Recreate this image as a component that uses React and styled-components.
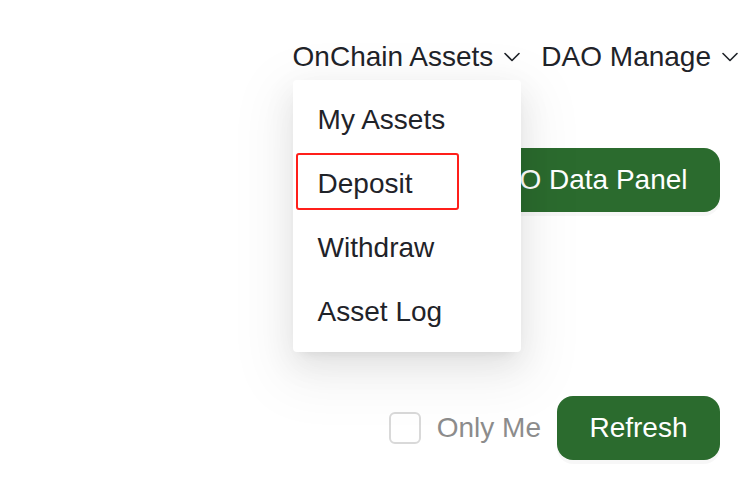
import React from "react";
import styled, { createGlobalStyle } from "styled-components";

const GlobalStyle = createGlobalStyle`
  html, body {
    margin: 0;
    padding: 0;
    background: #ffffff;
  }
  body {
    font-family: "Liberation Sans", Arial, sans-serif;
    color: #1f2329;
  }
`;

const Chevron = () => (
  <svg width="16" height="10" viewBox="0 0 16 10" fill="none">
    <polyline
      points="1,1.5 8,8.5 15,1.5"
      stroke="currentColor"
      strokeWidth="1.6"
      strokeLinecap="round"
      strokeLinejoin="round"
    />
  </svg>
);

const menuItems = ["My Assets", "Deposit", "Withdraw", "Asset Log"];

const App = () => {
  return (
    <>
      <GlobalStyle />
      <Page>
        <Header>
          <NavItem>
            <span>OnChain Assets</span>
            <Chevron />
            <Menu>
              {menuItems.map((item) => (
                <MenuItem key={item}>
                  {item === "Deposit" && <Mark />}
                  {item}
                </MenuItem>
              ))}
            </Menu>
          </NavItem>
          <NavItem>
            <span>DAO Manage</span>
            <Chevron />
          </NavItem>
        </Header>
        <Content>
          <Toolbar $top={70}>
            <Button>DAO Data Panel</Button>
          </Toolbar>
          <Toolbar $top={184}>
            <CheckLabel>
              <CheckBox />
              <span>Only Me</span>
            </CheckLabel>
            <Button>Refresh</Button>
          </Toolbar>
        </Content>
      </Page>
    </>
  );
};

export default App;

const Page = styled.div`
  width: 756px;
  height: 494px;
  box-sizing: border-box;
  padding-top: 36px;
  overflow: hidden;
`;

const Header = styled.div`
  display: flex;
  justify-content: flex-end;
  gap: 21px;
  padding-right: 18px;
  position: relative;
  z-index: 2;
`;

const NavItem = styled.div`
  position: relative;
  display: flex;
  align-items: center;
  gap: 11px;
  height: 42px;
  font-size: 28px;
  line-height: 42px;
  color: #1f2329;
  cursor: pointer;
`;

const Menu = styled.div`
  position: absolute;
  top: calc(100% + 2px);
  left: 0;
  width: 228px;
  box-sizing: border-box;
  padding: 8px 0;
  background: #ffffff;
  border-radius: 4px;
  box-shadow: 0 12px 32px rgba(0, 0, 0, 0.08), 0 6px 12px -8px rgba(0, 0, 0, 0.12),
    0 18px 56px 16px rgba(0, 0, 0, 0.05);
`;

const MenuItem = styled.div`
  position: relative;
  height: 64px;
  display: flex;
  align-items: center;
  padding: 0 25px;
  font-size: 28px;
  color: #1f2329;
`;

const Mark = styled.div`
  position: absolute;
  top: 1px;
  left: 3px;
  width: 163px;
  height: 57px;
  box-sizing: border-box;
  border: 2px solid #ff1f1a;
  border-radius: 3px;
`;

const Content = styled.div`
  padding: 0 36px;
`;

const Toolbar = styled.div`
  display: flex;
  justify-content: flex-end;
  align-items: center;
  gap: 16px;
  margin-top: ${(p) => p.$top}px;
`;

const Button = styled.button`
  height: 64px;
  padding: 0 32.5px;
  border: none;
  border-radius: 16px;
  background: #2b6b2e;
  color: #ffffff;
  font-family: "Liberation Sans", Arial, sans-serif;
  font-size: 28px;
  box-shadow: 0 4px 0 rgba(0, 0, 0, 0.03);
  cursor: pointer;
`;

const CheckLabel = styled.label`
  display: flex;
  align-items: center;
  gap: 16px;
  font-size: 28px;
  color: #8c8c8c;
`;

const CheckBox = styled.span`
  width: 32px;
  height: 32px;
  box-sizing: border-box;
  border: 2px solid #d9d9d9;
  border-radius: 6px;
  background: #ffffff;
`;
